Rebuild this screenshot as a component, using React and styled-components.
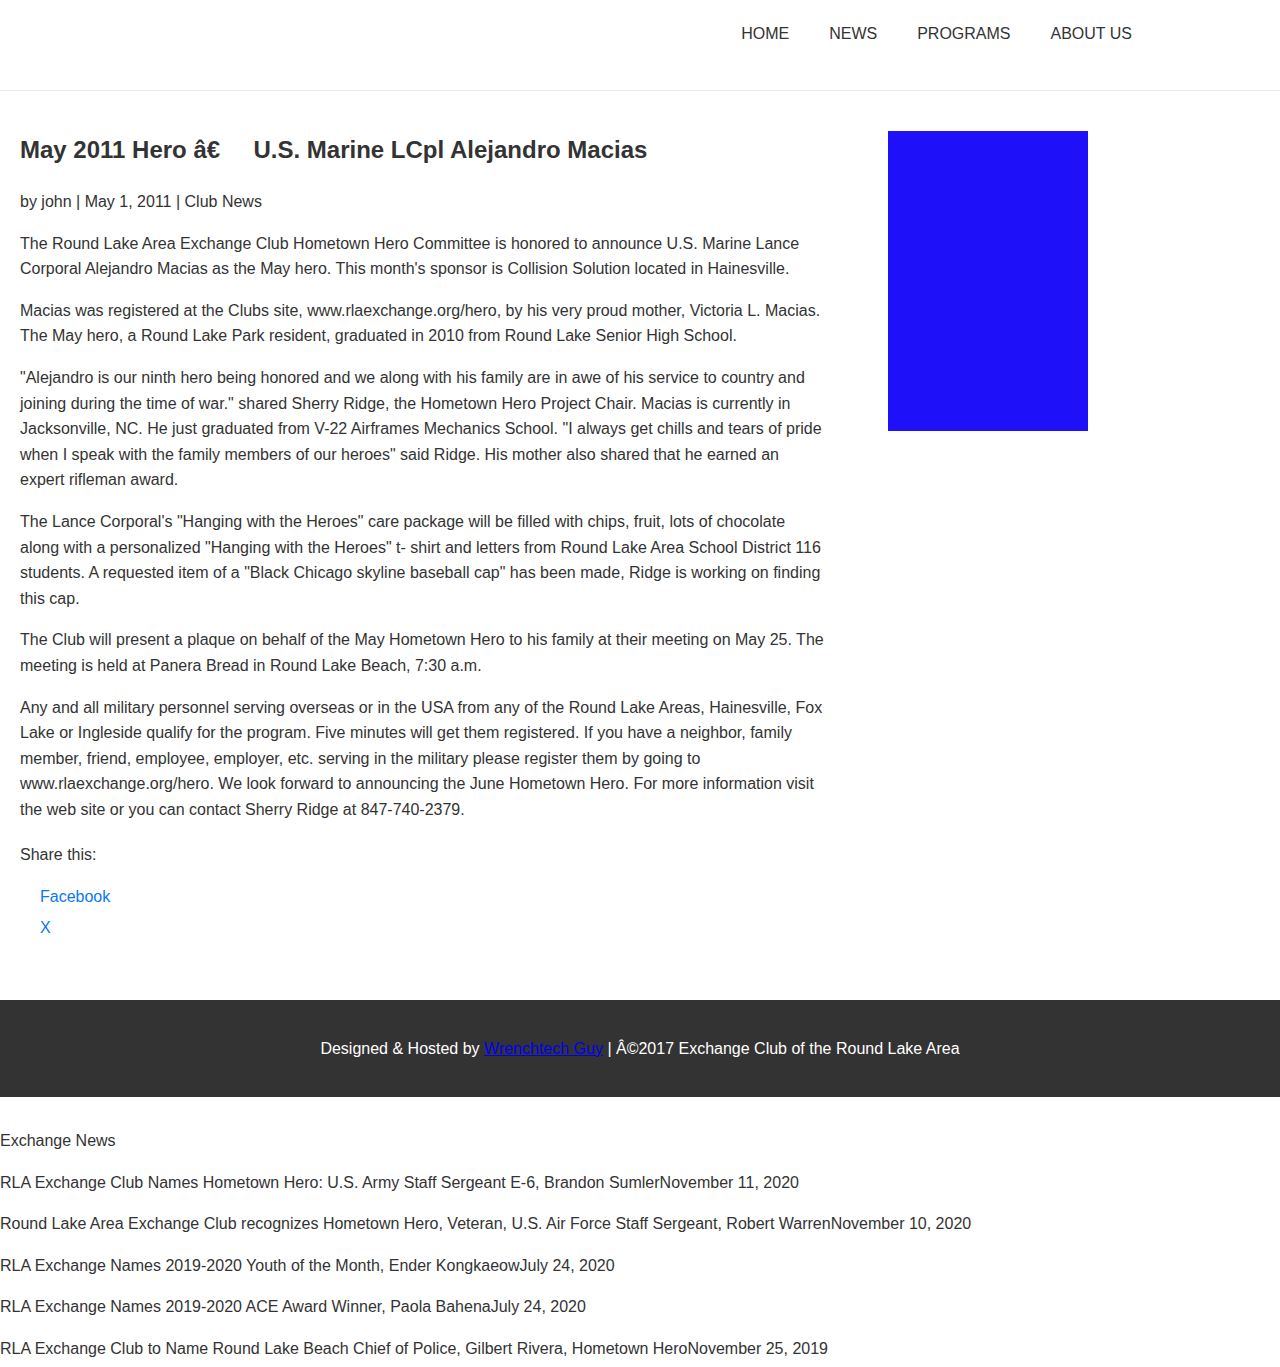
import React from 'react';
import styled, { createGlobalStyle } from 'styled-components';

const paragraphs = [
  "The Round Lake Area Exchange Club Hometown Hero Committee is honored to announce U.S. Marine Lance Corporal Alejandro Macias as the May hero. This month's sponsor is Collision Solution located in Hainesville.",
  'Macias was registered at the Clubs site, www.rlaexchange.org/hero, by his very proud mother, Victoria L. Macias. The May hero, a Round Lake Park resident, graduated in 2010 from Round Lake Senior High School.',
  '"Alejandro is our ninth hero being honored and we along with his family are in awe of his service to country and joining during the time of war." shared Sherry Ridge, the Hometown Hero Project Chair. Macias is currently in Jacksonville, NC. He just graduated from V-22 Airframes Mechanics School. "I always get chills and tears of pride when I speak with the family members of our heroes" said Ridge. His mother also shared that he earned an expert rifleman award.',
  'The Lance Corporal\'s "Hanging with the Heroes" care package will be filled with chips, fruit, lots of chocolate along with a personalized "Hanging with the Heroes" t- shirt and letters from Round Lake Area School District 116 students. A requested item of a "Black Chicago skyline baseball cap" has been made, Ridge is working on finding this cap.',
  'The Club will present a plaque on behalf of the May Hometown Hero to his family at their meeting on May 25. The meeting is held at Panera Bread in Round Lake Beach, 7:30 a.m.',
  'Any and all military personnel serving overseas or in the USA from any of the Round Lake Areas, Hainesville, Fox Lake or Ingleside qualify for the program. Five minutes will get them registered. If you have a neighbor, family member, friend, employee, employer, etc. serving in the military please register them by going to www.rlaexchange.org/hero. We look forward to announcing the June Hometown Hero. For more information visit the web site or you can contact Sherry Ridge at 847-740-2379.',
];

const news = [
  ['RLA Exchange Club Names Hometown Hero: U.S. Army Staff Sergeant E-6, Brandon Sumler', 'November 11, 2020'],
  ['Round Lake Area Exchange Club recognizes Hometown Hero, Veteran, U.S. Air Force Staff Sergeant, Robert Warren', 'November 10, 2020'],
  ['RLA Exchange Names 2019-2020 Youth of the Month, Ender Kongkaeow', 'July 24, 2020'],
  ['RLA Exchange Names 2019-2020 ACE Award Winner, Paola Bahena', 'July 24, 2020'],
  ['RLA Exchange Club to Name Round Lake Beach Chief of Police, Gilbert Rivera, Hometown Hero', 'November 25, 2019'],
];

const navItems = ['HOME', 'NEWS', 'PROGRAMS', 'ABOUT US'];

function App() {
  return (
    <>
      <GlobalStyle />
      <Header>
        <Nav>
          {navItems.map((item) => (
            <NavLink key={item} href='#'>
              {item}
            </NavLink>
          ))}
        </Nav>
      </Header>

      <Main>
        <Article>
          <Title>May 2011 Hero â€{'\u00a0\u00a0\u00a0\u00a0'} U.S. Marine LCpl Alejandro Macias</Title>
          <Meta>by john | May 1, 2011 | Club News</Meta>
          {paragraphs.map((text, i) => (
            <Paragraph key={i}>{text}</Paragraph>
          ))}
          <ShareTitle>Share this:</ShareTitle>
          <ShareList>
            <li>
              <ShareLink href='#'>Facebook</ShareLink>
            </li>
            <li>
              <ShareLink href='#'>X</ShareLink>
            </li>
          </ShareList>
        </Article>
        <Sidebar>
          <AdBox />
        </Sidebar>
      </Main>

      <Footer>
        Designed &amp; Hosted by <FooterLink href='#'>Wrenchtech Guy</FooterLink> | Â©2017 Exchange Club of the Round Lake Area
      </Footer>

      <NewsSection>
        <NewsLine>Exchange News</NewsLine>
        {news.map(([title, date]) => (
          <NewsLine key={title}>
            {title}
            {date}
          </NewsLine>
        ))}
      </NewsSection>
    </>
  );
}

const GlobalStyle = createGlobalStyle`
  body {
    margin: 0;
    background: #fff;
    color: #333;
    font-family: "Liberation Sans", Arial, Helvetica, sans-serif;
    font-size: 16px;
    line-height: 1.6;
  }
`;

const Header = styled.header`
  height: 90px;
  border-bottom: 1px solid #ebebeb;
`;

const Nav = styled.nav`
  display: flex;
  justify-content: flex-end;
  padding: 24px 128px 0 0;
`;

const NavLink = styled.a`
  padding: 0 20px;
  font-size: 16px;
  line-height: 20px;
  color: #333;
  text-decoration: none;
`;

const Main = styled.main`
  display: grid;
  grid-template-columns: 806px 200px;
  column-gap: 62px;
  padding: 40px 20px 0;
  align-items: start;
`;

const Article = styled.article`
  min-width: 0;
`;

const Title = styled.h1`
  margin: 0 0 20px;
  font-size: 24px;
  font-weight: bold;
  line-height: 38px;
  color: #333;
`;

const Meta = styled.p`
  margin: 0 0 16px;
`;

const Paragraph = styled.p`
  margin: 0 0 16px;
`;

const ShareTitle = styled.p`
  margin: 20px 0 0;
`;

const ShareList = styled.ul`
  list-style: none;
  margin: 13px 0 0;
  padding: 0 0 0 20px;

  li {
    line-height: 31px;
  }
`;

const ShareLink = styled.a`
  color: #0a78f0;
  text-decoration: none;
`;

const Sidebar = styled.aside`
  padding-top: 0;
`;

const AdBox = styled.div`
  width: 200px;
  height: 300px;
  background: #1e10f8;
`;

const Footer = styled.footer`
  margin-top: 57px;
  height: 97px;
  background: #333;
  color: #fff;
  display: flex;
  align-items: center;
  justify-content: center;
  font-size: 16px;
  white-space: pre;
`;

const FooterLink = styled.a`
  color: #0000ee;
  text-decoration: underline;
`;

const NewsSection = styled.section`
  padding-top: 31px;
`;

const NewsLine = styled.p`
  margin: 0 0 16px;
`;

export default App;
